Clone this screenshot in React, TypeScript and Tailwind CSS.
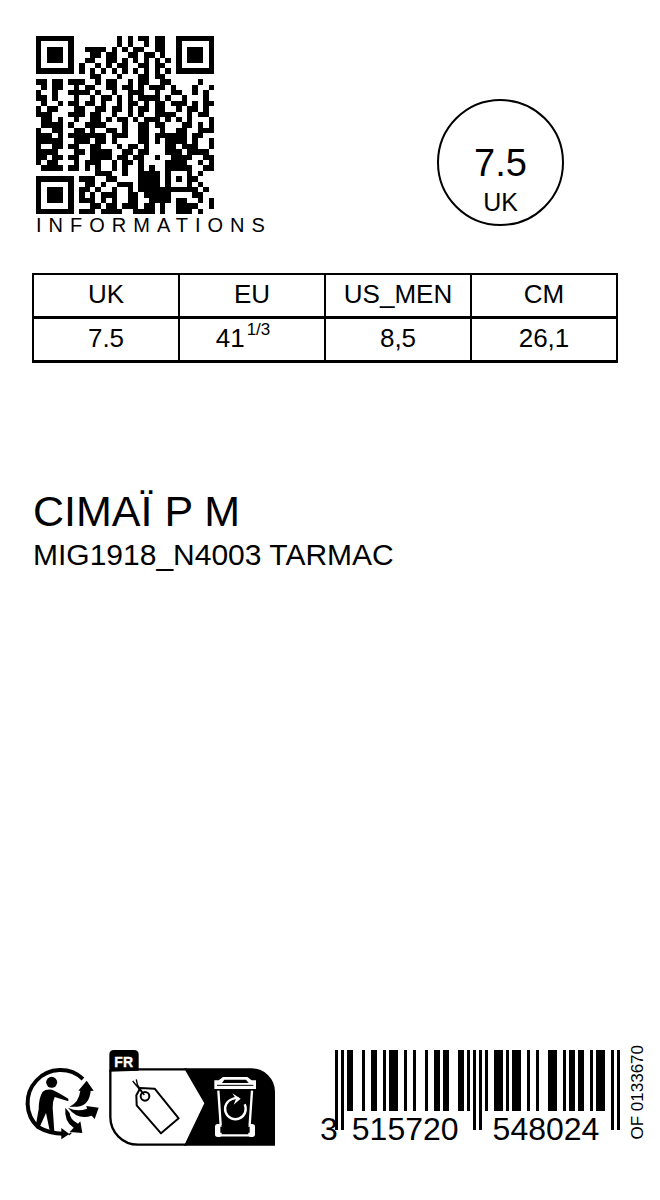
import React from "react";

const QR_ROWS = [
  "#######........#.#.##.##..#######",
  "#.....#........#.#..#.##..#.....#",
  "#.###.#..####.#.#.##..##..#.###.#",
  "#.###.#...##.##..##.##.#..#.###.#",
  "#.###.#..##..##.#.#.#.#.#.#.###.#",
  "#.....#.#..#.#.##..##.##..#.....#",
  "#######.#.#.#.#.#.#.#.#.#.#######",
  "..........##...#...##.##.........",
  "##.##.###..#.##..#.##..##.....#..",
  ".#.##..#.##..##.##.#.###.#...#..#",
  "#..#..####.#..#..###..#..##..#.#.",
  "##.#...#..#.##.#.#.####.#..#...#.",
  ".#..#.##.##.#..#.##.#.##.###.#.##",
  "#.##...##..##.##.#.##.##..#.##.#.",
  "###...###.##..#..#.#..####..#.##.",
  ".##.#..#..##.#.##.#.###.#.#.#...#",
  ".####.#..####...#..##.##...##.#.#",
  "#..##..##.#..##.#..##..#..##..###",
  "###.#.#######.###..##.######.##..",
  "#####..###.##.#....##.#.####.#..#",
  "#..##.##..##...#.##.#...##.###..#",
  "####...##.####..##.##...###.####.",
  "##.##.##..####.##.##..#..####..##",
  "#.##...#.###..#.##.#....####..#.#",
  ".####.##.#.#..#.#..#.#..#####..##",
  "...........###..#..####.#...#.#..",
  "#######.###..##....####.#.#.##...",
  "#.....#..##.#..###.####.#...#.#..",
  "#.###.#.##.#..#..#.###########.#.",
  "#.###.#.#.#.###..##.#####....##..",
  "#.###.#.###.#.#..##..####.##..#.#",
  "#.....#...##.##.###.##.#..####..#",
  "#######.###.####..####.#..###.#..",
];

const L_CODES = [
  "0001101", "0011001", "0010011", "0111101", "0100011",
  "0110001", "0101111", "0111011", "0110111", "0001011",
];
const invert = (code: string) =>
  code.split("").map((b) => (b === "1" ? "0" : "1")).join("");
const reverse = (code: string) => code.split("").reverse().join("");

/* EAN-13 with a leading 3 uses the parity LLGGGL for its left half. */
function encode(left: string, right: string) {
  const parity = "LLGGGL";
  const l = left.split("").map((d, i) => {
    const code = L_CODES[Number(d)];
    return parity[i] === "L" ? code : reverse(invert(code));
  });
  const r = right.split("").map((d) => invert(L_CODES[Number(d)]));
  return "101" + l.join("") + "01010" + r.join("") + "101";
}

function QrCode() {
  return (
    <svg viewBox="0 0 33 33" className="block size-[178px]" shapeRendering="crispEdges" role="img" aria-label="QR code">
      {QR_ROWS.map((row, y) =>
        row.split("").map((c, x) =>
          c === "#" ? <rect key={`${x}-${y}`} x={x} y={y} width="1" height="1" /> : null
        )
      )}
    </svg>
  );
}

function Barcode({ first, left, right }: { first: string; left: string; right: string }) {
  const bits = encode(left, right);
  return (
    <div className="mb-px">
      <svg viewBox="0 0 285 80" className="ml-4 block h-20 w-[285px]" shapeRendering="crispEdges" role="img" aria-label="Barcode">
        {bits.split("").map((b, i) => {
          const guard = i < 3 || (i > 44 && i < 50) || i > 91;
          return b === "1" ? <rect key={i} x={i * 3} y="0" width="3" height={guard ? 80 : 61} /> : null;
        })}
      </svg>
      <div className="-mt-[17px] flex pl-px text-[32px] leading-8">
        <span>{first}</span>
        <span className="ml-[14px]">{left}</span>
        <span className="ml-[34px]">{right}</span>
      </div>
    </div>
  );
}

function TrimanLogo() {
  return (
    <svg viewBox="14 62 231 225" className="mb-1.5 block h-[75px] w-[77px]" role="img" aria-label="Triman">
      <path d="M191 104A98 98 0 1 0 56 248Q90 268 132 268" fill="none" stroke="#000" strokeWidth="12" />
      <path d="M126 251L150 269L126 285Z" />
      <circle cx="97" cy="114" r="16.500" />
      <path d="M70 142Q80 133 98 136Q108 139 147 163V171L106 158Q100 170 100 190L105 262L92 263L80 206L60 250L50 240L58 195Q58 160 70 142Z" />
      <path d="M150 187Q178 176 183 139L177 139L202 109L223 139L214 140Q210 184 174 187Q162 188 150 187Z" />
      <path d="M146 190Q174 204 203 193L201 185L238 190L226 224L217 214Q176 229 146 190Z" />
      <path d="M138 190Q134 232 163 250L151 263L189 266L183 231L176 238Q152 226 151 206Z" />
      <path d="M148 272L156 265" stroke="#000" strokeWidth="4" />
    </svg>
  );
}

function SortingLabel() {
  return (
    <svg viewBox="264 12 504 291" className="ml-[7px] block h-[97px] w-[168px]" role="img" aria-label="FR">
      <path d="M268 80V29Q268 15 282 15H342Q356 15 356 29V77Z" />
      <text x="311" y="65" textAnchor="middle" fill="#fff" stroke="#fff" strokeWidth="1" fontSize="42" fontWeight="700" className="font-['Liberation_Sans',sans-serif]">FR</text>
      <path d="M271 74V216A83 83 0 0 0 354 299H500M271 73H500" fill="none" stroke="#000" strokeWidth="7" />
      <path d="M492 70H695A70 70 0 0 1 765 140V302H492L553 175Z" />
      <g fill="none" stroke="#000" strokeWidth="6" strokeLinejoin="round">
        <path d="M361 129L404 131L476 220L423 265L350 181L349 151Z" />
        <circle cx="375" cy="154" r="13" />
        <path d="M338 108L370 147M349 103L352 119Q360 132 373 150" strokeWidth="4" />
      </g>
      <path fill="#fff" d="M583 106H596L609 96H682L695 106H708V132H583Z" />
      <path d="M606 114L613 104H678L686 114Z" />
      <path d="M591 121H700" stroke="#000" strokeWidth="3" />
      <g fill="none" stroke="#fff" strokeWidth="7">
        <path d="M595 137L602 240M696 137L689 240" />
        <path d="M598 271H694" />
        <path d="M674 178A31 31 0 1 1 637 162Q645 158 656 160" />
      </g>
      <rect x="585" y="237" width="20" height="39" rx="8" fill="#fff" />
      <rect x="685" y="237" width="20" height="39" rx="8" fill="#fff" />
      <path d="M637 145L662 161L641 179L648 162Z" fill="#fff" />
      <path d="M601 263V245H607V263ZM683 263V245H689V263Z" />
    </svg>
  );
}

const SIZES = [
  { system: "UK", value: "7.5" },
  { system: "EU", value: "41", fraction: "1/3" },
  { system: "US_MEN", value: "8,5" },
  { system: "CM", value: "26,1" },
];

export default function App() {
  return (
    <main className="flex min-h-screen flex-col bg-white font-['Liberation_Sans',Arial,sans-serif] text-black">
      <header className="flex items-start justify-between pt-9 pr-24 pl-9">
        <div>
          <QrCode />
          <p className="text-xl leading-[22px] tracking-[7px]">INFORMATIONS</p>
        </div>
        <div className="mt-[63px] flex size-[127px] flex-col items-center justify-end rounded-full border-2 border-black pb-2">
          <span className="text-[38px] leading-[42px]">7.5</span>
          <span className="mt-1 text-[25px] leading-7">UK</span>
        </div>
      </header>

      <div className="mt-[37px] pr-[42px] pl-8">
        <table className="w-full table-fixed border-collapse border-2 border-black text-center text-[26px] leading-8">
          <thead>
            <tr className="h-[43px]">
              {SIZES.map((s) => (
                <th key={s.system} scope="col" className="border-2 border-b-[3px] border-black p-0 pb-0.5 font-normal">{s.system}</th>
              ))}
            </tr>
          </thead>
          <tbody>
            <tr className="h-11">
              {SIZES.map((s) => (
                <td key={s.system} className="border-2 border-b-[3px] border-black p-0 pb-0.5">
                  {s.fraction ? (
                    <span className="flex justify-center gap-0.5 pr-[18px]">
                      {s.value}
                      <span className="text-[17px] leading-4">{s.fraction}</span>
                    </span>
                  ) : (
                    s.value
                  )}
                </td>
              ))}
            </tr>
          </tbody>
        </table>
      </div>

      <section className="mt-[126px] px-[33px]">
        <h1 className="text-[43px] leading-11">CIMAÏ P M</h1>
        <p className="mt-0.5 text-[30px] leading-10">MIG1918_N4003 TARMAC</p>
      </section>

      <footer className="mt-auto flex items-end pt-8 pr-3 pb-[54px] pl-6">
        <TrimanLogo />
        <SortingLabel />
        <div className="ml-auto flex items-end gap-2">
          <Barcode first="3" left="515720" right="548024" />
          <p className="mb-1.5 rotate-180 text-[17px] leading-5 [writing-mode:vertical-rl]">OF 0133670</p>
        </div>
      </footer>
    </main>
  );
}
